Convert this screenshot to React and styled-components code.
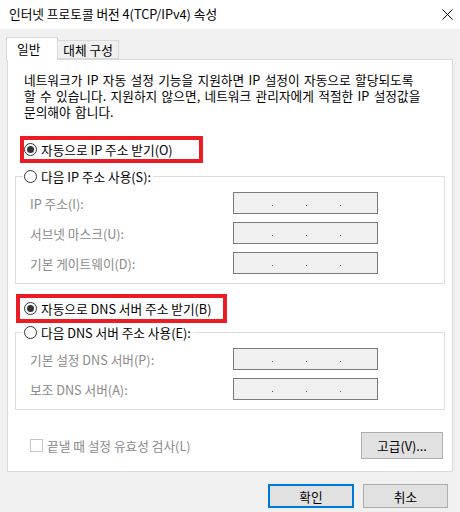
import styled, { createGlobalStyle } from "styled-components";

const GlobalStyle = createGlobalStyle`
  html, body {
    margin: 0;
    padding: 0;
    background: #f0f0f0;
  }
  body {
    font-family: "Noto Sans CJK KR", "Noto Sans", "Liberation Sans", sans-serif;
    font-size: 12.7px;
    color: #000;
  }
`;

const Window = styled.div`
  width: 460px;
  height: 512px;
  display: flex;
  flex-direction: column;
  background: #f0f0f0;
  overflow: hidden;
`;

const TitleBar = styled.div`
  height: 29px;
  background: #fff;
  display: flex;
  align-items: center;
  justify-content: space-between;
  padding: 0 7px 1px 9px;
  box-sizing: border-box;
`;

const Title = styled.span`
  font-size: 12.7px;
  line-height: 16px;
`;

const Body = styled.div`
  padding: 8px 7px 0 7px;
`;

const TabStrip = styled.div`
  display: flex;
  align-items: flex-end;
  height: 22px;
  position: relative;
  z-index: 1;
`;

const Tab = styled.div`
  box-sizing: border-box;
  border: 1px solid #d9d9d9;
  border-bottom: ${(p) => (p.$active ? "none" : "1px solid #d9d9d9")};
  background: ${(p) => (p.$active ? "#fff" : "#f0f0f0")};
  height: ${(p) => (p.$active ? "23px" : "19px")};
  margin-bottom: ${(p) => (p.$active ? "-1px" : "0")};
  margin-left: -1px;
  padding: ${(p) => (p.$active ? "2px 17px 0 10px" : "0 5px 0 5px")};
  line-height: 17px;
  font-size: 12.7px;
  white-space: nowrap;
`;

const Panel = styled.div`
  background: #fff;
  border: 1px solid #d9d9d9;
  height: 413px;
  box-sizing: border-box;
  padding: 12px 7px 0 7px;
`;

const Description = styled.p`
  margin: 0 0 0 9px;
  line-height: 16px;
  font-size: 12.7px;
  word-spacing: 1.5px;
  white-space: nowrap;
`;

const Highlight = styled.div`
  box-sizing: border-box;
  display: flex;
  align-items: center;
  border: 4px solid #ed1c24;
  width: ${(p) => p.$w}px;
  height: ${(p) => p.$h}px;
  margin: ${(p) => p.$m};
  padding-left: ${(p) => p.$pl}px;
`;

const RadioRow = styled.label`
  display: inline-flex;
  align-items: center;
  gap: 4px;
  line-height: 16px;
  font-size: 12.7px;
  white-space: nowrap;
`;

const RadioCircle = styled.span`
  width: 13px;
  height: 13px;
  box-sizing: border-box;
  border: 1px solid #333;
  border-radius: 50%;
  background: #fff;
  display: flex;
  align-items: center;
  justify-content: center;
  flex: none;
  &::after {
    content: "";
    display: ${(p) => (p.$checked ? "block" : "none")};
    width: 7px;
    height: 7px;
    border-radius: 50%;
    background: #333;
  }
`;

const Group = styled.fieldset`
  margin: ${(p) => p.$m};
  border: 1px solid #dcdcdc;
  padding: 8px 0 9px 14px;
  min-width: 0;
`;

const Legend = styled.legend`
  padding: 0 2px 0 1px;
  margin-left: -7px;
  height: 16px;
`;

const FieldRows = styled.div`
  display: flex;
  flex-direction: column;
  gap: 8px;
`;

const FieldRow = styled.div`
  display: grid;
  grid-template-columns: 203px 145px;
  align-items: center;
  height: 22px;
`;

const FieldLabel = styled.span`
  color: #8a8a8a;
  font-size: 12.7px;
  white-space: nowrap;
`;

const IpBox = styled.div`
  box-sizing: border-box;
  width: 145px;
  height: 22px;
  border: 1px solid #7a7a7a;
  background: #f0f0f0;
  display: flex;
  padding-left: 38px;
  gap: 33px;
  align-items: center;
`;

const Dot = styled.span`
  width: 1px;
  height: 1px;
  margin-top: 5px;
  background: #555;
`;

const BottomRow = styled.div`
  display: flex;
  align-items: center;
  justify-content: space-between;
  margin: 22px 2px 0 15px;
`;

const CheckRow = styled.label`
  display: inline-flex;
  align-items: center;
  gap: 4px;
  color: #8a8a8a;
  font-size: 12.7px;
`;

const CheckBox = styled.span`
  width: 13px;
  height: 13px;
  box-sizing: border-box;
  border: 1px solid #c6c6c6;
  background: #fff;
`;

const Button = styled.button`
  box-sizing: border-box;
  width: ${(p) => p.$w}px;
  height: ${(p) => p.$h}px;
  background: #e1e1e1;
  border: ${(p) => (p.$primary ? "2px solid #0078d7" : "1px solid #adadad")};
  font-family: inherit;
  font-size: 12.7px;
  color: #000;
  padding: 0;
  border-radius: 0;
`;

const Footer = styled.div`
  display: flex;
  justify-content: flex-end;
  gap: 9px;
  padding: 12px 5px 0 0;
`;

const CloseIcon = () => (
  <svg width="11" height="11" viewBox="0 0 11 11">
    <path d="M0.5 0.5 L10.5 10.5 M10.5 0.5 L0.5 10.5" stroke="#000" strokeWidth="1" />
  </svg>
);

const IpField = ({ label }) => (
  <FieldRow>
    <FieldLabel>{label}</FieldLabel>
    <IpBox>
      <Dot />
      <Dot />
      <Dot />
    </IpBox>
  </FieldRow>
);

function App() {
  return (
    <Window>
      <GlobalStyle />
      <TitleBar>
        <Title>인터넷 프로토콜 버전 4(TCP/IPv4) 속성</Title>
        <CloseIcon />
      </TitleBar>
      <Body>
        <TabStrip>
          <Tab $active>일반</Tab>
          <Tab>대체 구성</Tab>
        </TabStrip>
        <Panel>
          <Description>
            네트워크가 IP 자동 설정 기능을 지원하면 IP 설정이 자동으로 할당되도록
            <br />
            할 수 있습니다. 지원하지 않으면, 네트워크 관리자에게 적절한 IP 설정값을
            <br />
            문의해야 합니다.
          </Description>

          <Highlight $w={183} $h={27} $m="16px 0 0 5px" $pl={0}>
            <RadioRow>
              <RadioCircle $checked />
              자동으로 IP 주소 받기(O)
            </RadioRow>
          </Highlight>

          <Group $m="5px 0 0 0">
            <Legend>
              <RadioRow>
                <RadioCircle />
                다음 IP 주소 사용(S):
              </RadioRow>
            </Legend>
            <FieldRows>
              <IpField label="IP 주소(I):" />
              <IpField label="서브넷 마스크(U):" />
              <IpField label="기본 게이트웨이(D):" />
            </FieldRows>
          </Group>

          <Highlight $w={211} $h={29} $m="10px 0 0 1px" $pl={4}>
            <RadioRow>
              <RadioCircle $checked />
              자동으로 DNS 서버 주소 받기(B)
            </RadioRow>
          </Highlight>

          <Group $m="1px 0 0 0">
            <Legend>
              <RadioRow>
                <RadioCircle />
                다음 DNS 서버 주소 사용(E):
              </RadioRow>
            </Legend>
            <FieldRows>
              <IpField label="기본 설정 DNS 서버(P):" />
              <IpField label="보조 DNS 서버(A):" />
            </FieldRows>
          </Group>

          <BottomRow>
            <CheckRow>
              <CheckBox />
              끝낼 때 설정 유효성 검사(L)
            </CheckRow>
            <Button $w={82} $h={27}>고급(V)...</Button>
          </BottomRow>
        </Panel>
        <Footer>
          <Button $primary $w={86} $h={24}>확인</Button>
          <Button $w={85} $h={24}>취소</Button>
        </Footer>
      </Body>
    </Window>
  );
}

export default App;
